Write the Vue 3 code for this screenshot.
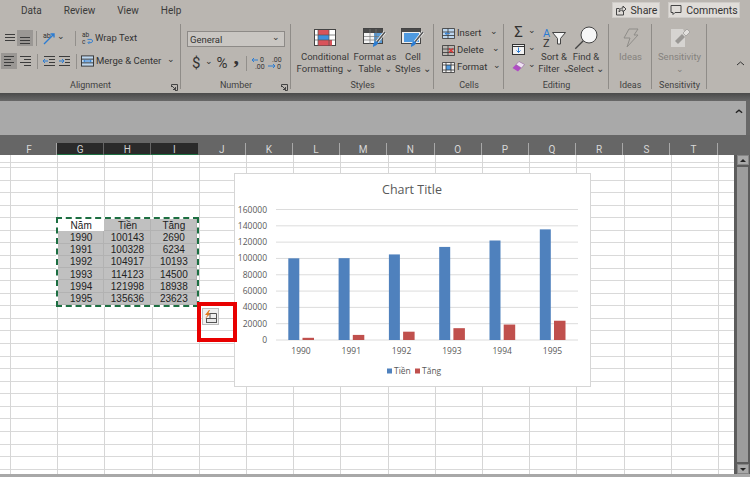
<template>
  <div class="excel">
    <header class="ribbon">
      <div class="tabs">
        <nav class="tab-list">
          <span v-for="t in tabs" :key="t">{{ t }}</span>
        </nav>
        <div class="tab-actions">
          <button class="top-btn share">
            <svg width="12" height="12" viewBox="0 0 12 12" fill="none" stroke="#444"><path d="M1.5 4.500h3M1.500 4.500v6.500h7V8" /><path d="M4 8c0-3 2-4 4-4V2l3 3-3 3V6C6 6 5 7 4 8z" /></svg>
            Share
          </button>
          <button class="top-btn comments">
            <svg width="12" height="12" viewBox="0 0 12 12" fill="none" stroke="#444"><path d="M1 1.500h10v7H5L3 10.500v-2H1z" /></svg>
            Comments
          </button>
        </div>
      </div>

      <div class="groups">
        <section class="group alignment">
          <div class="group-body align-rows">
            <div class="tool-row">
              <svg class="ico" viewBox="0 0 16 16" stroke="#3c3c3c"><path d="M4 4.500h10M4 7.500h10M4 10.500h10" /></svg>
              <svg class="ico on" viewBox="0 0 16 16" stroke="#3c3c3c"><path d="M3 7.500h10M3 10.500h10M3 13.500h10" /></svg>
              <i class="sep s1"></i>
              <svg class="orient" viewBox="0 0 14 14" fill="none"><text x="1" y="7" class="tiny">ab</text><path d="M2 13 12 3M8.500 3H12v3.500" stroke="#2b7cd3" stroke-width="1.400" /></svg>
              <span class="chev">⌄</span>
              <i class="sep s2"></i>
              <svg class="wrap-ico" viewBox="0 0 14 14" fill="none"><text x="1" y="6" class="tiny">ab</text><text x="1" y="13" class="tiny">c</text><path d="M7 8.500h4a1.800 1.800 0 0 1 0 3.500H8M9 10.500l-1.500 1.500L9 13.500" stroke="#2b7cd3" /></svg>
              <span class="label">Wrap Text</span>
            </div>
            <div class="tool-row">
              <svg class="ico on" viewBox="0 0 16 16" stroke="#3c3c3c"><path d="M3 3.500h10M3 6.500h7M3 9.500h10M3 12.500h7" /></svg>
              <svg class="ico" viewBox="0 0 16 16" stroke="#3c3c3c"><path d="M3 3.500h11M7 6.500h7M3 9.500h11M7 12.500h7" /></svg>
              <i class="sep s3"></i>
              <svg class="ico" viewBox="0 0 16 16" fill="none" stroke="#3c3c3c"><path d="M3 3.500h11M8 6.500h6M8 9.500h6M3 12.500h11" /><path d="M7 8H2M4 6 2 8l2 2" stroke="#2b7cd3" /></svg>
              <svg class="ico" viewBox="0 0 16 16" fill="none" stroke="#3c3c3c"><path d="M2 3.500h11M8 6.500h5M8 9.500h5M2 12.500h11" /><path d="M2 8h5M5 6l2 2-2 2" stroke="#2b7cd3" /></svg>
              <i class="sep s4"></i>
              <svg class="merge-ico" viewBox="0 0 14 12" fill="#bcd6ee" stroke="#333"><rect x="0.500" y="0.500" width="13" height="11" /><path d="M.5 4h13M.5 8h13" /><path d="M3 6h8M4.500 4.500 3 6l1.500 1.500M9.500 4.500 11 6 9.500 7.500" stroke="#2b7cd3" fill="none" /></svg>
              <span class="label merge-text">Merge &amp; Center</span>
              <span class="chev">⌄</span>
            </div>
          </div>
          <footer class="caption">Alignment</footer>
          <svg class="launcher" viewBox="0 0 7 7" fill="none" stroke="#444"><path d="M.5 3V.5H6.500V6.500H4" /><path d="M1 2l3.500 3.500M4.500 3v2.500H2" /></svg>
        </section>

        <section class="group number">
          <div class="group-body number-body">
            <div class="format-select"><span>General</span><span class="chev">⌄</span></div>
            <div class="number-tools">
              <span class="sym dollar">$</span>
              <span class="chev">⌄</span>
              <span class="sym percent">%</span>
              <span class="sym comma">,</span>
              <i class="sep"></i>
              <svg class="dec" viewBox="0 0 16 14" fill="none"><text x="9" y="6" class="tiny">0</text><text x="4" y="13" class="tiny">.00</text><path d="M7 4H1M3 2 1 4l2 2" stroke="#2b7cd3" /></svg>
              <svg class="dec" viewBox="0 0 16 14" fill="none"><text x="5" y="6" class="tiny">.00</text><text x="10" y="13" class="tiny">0</text><path d="M1 10h7M6 8l2 2-2 2" stroke="#2b7cd3" /></svg>
            </div>
          </div>
          <footer class="caption">Number</footer>
          <svg class="launcher" viewBox="0 0 7 7" fill="none" stroke="#444"><path d="M.5 3V.5H6.500V6.500H4" /><path d="M1 2l3.500 3.500M4.500 3v2.500H2" /></svg>
        </section>

        <section class="group styles">
          <div class="group-body big-row">
            <div class="big cond">
              <svg class="big-ico" viewBox="0 0 24 20"><rect x="1.500" y="1.500" width="21" height="16" fill="#fff" stroke="#444" /><path d="M5 2h11v5H5z" fill="#d9535a" /><path d="M5 7h11v5H5z" fill="#3f8fdd" /><path d="M5 12h14v5.500H5z" fill="#d9535a" /><path d="M5 2v16M16 2v16M1.500 7h21M1.500 12h21" stroke="#555" fill="none" stroke-width=".7" /></svg>
              <span>Conditional</span><span>Formatting ⌄</span>
            </div>
            <div class="big table">
              <svg class="big-ico" viewBox="0 0 24 20" fill="none"><rect x=".5" y=".5" width="19" height="15" fill="#f4f4f4" stroke="#444" /><rect x="1" y="1" width="18.500" height="4" fill="#4a4a4a" /><path d="M11 5h8v10h-8z" fill="#5b9bd5" /><path d="M1 8.500h19M1 12h19M7 1v15M13 1v15" stroke="#777" stroke-width=".7" /><path d="m22 4-8 10" stroke="#f5f5f5" stroke-width="3" /><path d="m22 4-8 10" stroke="#555" stroke-width="1.500" /><path d="M12 14c2-1 3 0 3 1-1 3-4 3-5 4 0-2 0-4 2-5z" fill="#2b7cd3" /></svg>
              <span>Format as</span><span>Table ⌄</span>
            </div>
            <div class="big cell">
              <svg class="big-ico" viewBox="0 0 24 20" fill="none"><rect x=".5" y=".5" width="19" height="15" fill="#eee" stroke="#444" /><rect x="1" y="1" width="18.500" height="3" fill="#4a4a4a" /><rect x="3" y="5" width="15" height="9" fill="#4f9ae0" /><path d="m22 4-8 10" stroke="#f5f5f5" stroke-width="3" /><path d="m22 4-8 10" stroke="#555" stroke-width="1.500" /><path d="M12 14c2-1 3 0 3 1-1 3-4 3-5 4 0-2 0-4 2-5z" fill="#2b7cd3" /></svg>
              <span>Cell</span><span>Styles ⌄</span>
            </div>
          </div>
          <footer class="caption">Styles</footer>
        </section>

        <section class="group cells">
          <div class="group-body cell-rows">
            <div class="cell-row">
              <svg class="cell-ico" viewBox="0 0 13 11" fill="#bcd6ee" stroke="#333" stroke-width=".8"><path d="M.5.5h12v10H.5zM.5 4h12M.5 7.500h12M6 .5v10" /><path d="M8 5.500H3M5 4 3 5.500 5 7" stroke="#2b7cd3" fill="none" /></svg>
              <span class="label">Insert</span><span class="chev c-insert">⌄</span>
            </div>
            <div class="cell-row">
              <svg class="cell-ico" viewBox="0 0 13 11" fill="none" stroke="#333" stroke-width=".8"><path d="M.5.5h12v10H.5zM.5 4h12M.5 7.500h12M6 .5v10" /><path d="m7 3.500 4 4M11 3.500l-4 4" stroke="#d33" stroke-width="1.300" /></svg>
              <span class="label">Delete</span><span class="chev c-delete">⌄</span>
            </div>
            <div class="cell-row">
              <svg class="cell-ico" viewBox="0 0 13 11" fill="#f2f2f2" stroke="#333" stroke-width=".8"><path d="M.5.5h12v10H.5z" /><path d="M4 3h5v5H4z" fill="#4f9ae0" stroke="none" /><path d="M.5 3h12M.5 8h12M4 .5v10M9 .5v10" fill="none" /></svg>
              <span class="label">Format</span><span class="chev">⌄</span>
            </div>
          </div>
          <footer class="caption">Cells</footer>
        </section>

        <section class="group editing">
          <div class="group-body big-row">
            <div class="edit-col">
              <div class="edit-row"><span class="sigma">Σ</span><span class="chev">⌄</span></div>
              <div class="edit-row">
                <svg class="edit-ico" viewBox="0 0 13 11" fill="#f2f2f2" stroke="#333"><rect x=".5" y=".5" width="12" height="10" /><path d="M.5 2.500h12" /><path d="M6.500 3.500v5M4.500 6.500l2 2 2-2" stroke="#2b7cd3" fill="none" /></svg>
                <span class="chev">⌄</span>
              </div>
              <div class="edit-row">
                <svg class="edit-ico" viewBox="0 0 13 11"><path d="M.5 7 7 .5l5.500 3-6.500 7z" fill="#b04cc4" /><path d="m7 .5 5.500 3-3 3.500L4 3.500z" fill="#efe2f3" stroke="#8a6a92" stroke-width=".5" /></svg>
                <span class="chev">⌄</span>
              </div>
            </div>
            <div class="big sort">
              <svg class="big-ico over" viewBox="0 0 24 20" fill="none"><text x="1" y="9" class="az blue">A</text><text x="1" y="19" class="az">Z</text><path d="M10.500 4.500h13l-5 6V16h-3v-5.500z" fill="#f5f5f5" stroke="#444" /></svg>
              <span>Sort &amp;</span><span>Filter ⌄</span>
            </div>
            <div class="big find">
              <svg class="big-ico over" viewBox="0 0 24 20" fill="none"><circle cx="15" cy="7" r="8" fill="#f6f6f6" stroke="#444" /><path d="m9.300 12.700-8 8" stroke="#444" stroke-width="1.300" /></svg>
              <span>Find &amp;</span><span>Select ⌄</span>
            </div>
          </div>
          <footer class="caption">Editing</footer>
        </section>

        <section class="group ideas">
          <div class="group-body big-row">
            <div class="big muted">
              <svg class="big-ico" viewBox="0 0 16 20" fill="none" stroke="#8f8d89"><path d="M6 1h9l-4 6h4L4 19l3-9H1z" /></svg>
              <span>Ideas</span>
            </div>
          </div>
          <footer class="caption">Ideas</footer>
        </section>

        <section class="group sensitivity">
          <div class="group-body big-row">
            <div class="big muted">
              <svg class="big-ico" viewBox="0 0 22 20"><path d="M2 1h12l2 4v14H2z" fill="#d6d4d1" /><path d="m6 13 7-7 3 3-7 7z" fill="#9a9895" /><path d="m14 5 4-4 3 3-4 4z" fill="#e2e0dd" stroke="#9a9895" stroke-width=".7" /></svg>
              <span>Sensitivity</span><span class="chev">⌄</span>
            </div>
          </div>
          <footer class="caption">Sensitivity</footer>
        </section>

        <svg class="collapse" viewBox="0 0 9 5" fill="none" stroke="#333"><path d="m1 4 3.500-3L8 4" /></svg>
      </div>
    </header>

    <div class="ribbon-shadow"></div>

    <div class="formula-bar">
      <svg class="collapse-bar" viewBox="0 0 9 5" fill="none" stroke="#222" stroke-width="1.500"><path d="m1 4 3.500-3L8 4" /></svg>
    </div>

    <div class="col-header">
      <span class="col-first"></span>
      <span
        v-for="c in columns"
        :key="c"
        class="col"
        :class="{ picked: selected.includes(c) }"
      >{{ c }}</span>
    </div>

    <div class="sheet-wrap">
      <main class="sheet">
        <div class="data-table">
          <template v-for="(row, i) in rows" :key="i">
            <span
              v-for="(v, j) in row"
              :key="j"
              class="data-cell"
              :class="{ active: i === 0 && j === 0 }"
            >{{ v }}</span>
          </template>
        </div>

        <div class="chart">
          <svg width="355" height="212" viewBox="235 174 355 212">
            <text x="412" y="194" class="chart-title" text-anchor="middle">Chart Title</text>
            <g v-for="t in ticks" :key="t">
              <line x1="276" x2="578" :y1="yOf(t)" :y2="yOf(t)" stroke="#dcdcdc" />
              <text x="267" :y="yOf(t) + 3" class="axis" text-anchor="end">{{ t }}</text>
            </g>
            <g v-for="(b, i) in bars" :key="b.year">
              <rect :x="288.300 + i * 50.300" :y="yOf(b.tien)" width="11" :height="340 - yOf(b.tien)" fill="#4f81bd" />
              <rect :x="302.500 + i * 50.300" :y="yOf(b.tang)" width="11.500" :height="340 - yOf(b.tang)" fill="#c0504d" />
              <text :x="301 + i * 50.300" y="354" class="axis" text-anchor="middle">{{ b.year }}</text>
            </g>
            <rect x="387" y="368.500" width="5" height="5" fill="#4f81bd" />
            <text x="394" y="374" class="axis">Tiền</text>
            <rect x="415" y="368.500" width="5" height="5" fill="#c0504d" />
            <text x="422" y="374" class="axis">Tăng</text>
          </svg>
        </div>

        <div class="quick-mark">
          <button class="quick-btn">
            <svg width="15" height="14" viewBox="0 0 15 14" fill="none"><path d="M6 0 2 5h2.500L2 9l6-6H5.500L7 0z" fill="#e07b20" /><rect x="3.500" y="8.500" width="10" height="4" fill="#e8e8e8" stroke="#555" /><path d="M7 8.500V3.500h6.500v9" stroke="#555" /></svg>
          </button>
        </div>
      </main>

      <aside class="scrollbar">
        <button class="scroll-btn"><i class="tri up"></i></button>
        <div class="scroll-track"></div>
        <button class="scroll-btn"><i class="tri down"></i></button>
      </aside>
    </div>
    <div class="bottom-strip"></div>
  </div>
</template>

<script setup>
const tabs = ['Data', 'Review', 'View', 'Help']
const columns = ['F', 'G', 'H', 'I', 'J', 'K', 'L', 'M', 'N', 'O', 'P', 'Q', 'R', 'S', 'T']
const selected = ['G', 'H', 'I']

const rows = [
  ['Năm', 'Tiền', 'Tăng'],
  [1990, 100143, 2690],
  [1991, 100328, 6234],
  [1992, 104917, 10193],
  [1993, 114123, 14500],
  [1994, 121998, 18938],
  [1995, 135636, 23623],
]

const ticks = [160000, 140000, 120000, 100000, 80000, 60000, 40000, 20000, 0]
const bars = rows.slice(1).map(([year, tien, tang]) => ({ year, tien, tang }))

// 0 sits at y=340 and 160000 at y=209.5 in page coords
const yOf = (v) => 340 - (v / 160000) * 130.5
</script>

<style>
html, body { margin: 0; background: #fff; }
</style>

<style scoped>
.excel { display: flex; flex-direction: column; width: 750px; height: 477px; overflow: hidden; font-family: Roboto, "Open Sans", sans-serif; color: #333; }

.ribbon { background: #bab6b1; height: 93px; flex: none; position: relative; }
.tabs { display: flex; justify-content: space-between; height: 23px; }
.tab-list { display: flex; gap: 22px; padding: 4px 0 0 21px; font-size: 10px; line-height: 14px; color: #3a3a3a; }
.tab-actions { display: flex; gap: 8px; padding: 2px 10px 0 0; }
.top-btn { display: flex; align-items: center; justify-content: center; gap: 4px; height: 16px; padding: 0; border: 1px solid #cfccc8; background: #dfdcd8; font: 10.500px Roboto, sans-serif; color: #333; }
.share { width: 48px; }
.comments { width: 72px; }

.groups { display: flex; height: 70px; }
.group { position: relative; display: flex; flex-direction: column; flex: none; height: 70px; }
.group::after { content: ""; position: absolute; right: 0; top: 1px; width: 1px; height: 65px; background: #8f8c88; }
.group-body { flex: 1; min-height: 0; }
.caption { height: 14px; font-size: 9px; line-height: 12px; text-align: center; color: #3f3f3f; }
.launcher { position: absolute; right: 3px; bottom: 2px; width: 7px; height: 7px; }
.alignment { width: 181px; }
.number { width: 110px; }
.styles { width: 143px; }
.cells { width: 70px; }
.editing { width: 105px; }
.ideas { width: 43px; }
.sensitivity { width: 55px; }

.label { font-size: 9.500px; line-height: 14px; white-space: nowrap; }
.chev { font-size: 9px; line-height: 9px; color: #333; position: relative; top: -2px; }
.tiny { font: 7px Roboto, sans-serif; fill: #333; }

.align-rows { display: flex; flex-direction: column; gap: 7px; padding: 7px 0 0 1px; }
.tool-row { position: relative; display: flex; align-items: center; height: 16px; }
.ico { width: 16px; height: 16px; flex: none; fill: none; }
.ico.on { background: #9a9794; }
.sep { display: block; width: 1px; height: 15px; background: #928f8b; flex: none; }
.s1 { margin: 0 5px 0 3px; }
.orient { width: 14px; height: 14px; margin-right: 1px; }
.s2 { margin: 0 5px 0 10px; }
.wrap-ico { width: 13px; height: 14px; margin-right: 1px; }
.s3 { margin: 0 3px 0 4px; }
.s4 { margin: 0 4px 0 3px; }
.merge-ico { width: 13px; height: 12px; margin-right: 2px; }
.merge-text { margin-right: 6px; }

.number-body { padding: 8px 6px 0; }
.format-select { display: flex; justify-content: space-between; align-items: center; box-sizing: border-box; width: 98px; height: 16px; padding: 0 4px 0 2px; background: #c9c6c2; border: 1px solid #8d8a87; font-size: 9.500px; }
.number-tools { display: flex; align-items: center; height: 18px; margin-top: 7px; padding-left: 5px; }
.sym { line-height: 18px; color: #333; }
.dollar { font-size: 15px; margin-right: 5px; }
.percent { font-size: 15px; margin: 0 6px 0 3px; }
.comma { font: bold 22px/14px "Liberation Serif", serif; position: relative; top: -6px; margin-right: 7px; }
.number-tools .sep { margin-right: 4px; }
.dec { width: 16px; height: 14px; flex: none; }

.big-row { display: flex; }
.big { display: flex; flex-direction: column; align-items: center; flex: none; font-size: 9.500px; line-height: 12px; white-space: nowrap; color: #3a3a3a; padding-top: 5px; }
.big-ico { height: 20px; width: 24px; margin-bottom: 3px; flex: none; }
.big-ico.over { overflow: visible; }
.cond { width: 58px; margin-left: 5px; }
.table { width: 42px; margin-left: 0; }
.cell { width: 34px; }
.muted { color: #85827e; width: 100%; }
.muted .chev { top: 0; margin-top: 2px; color: #85827e; }

.cell-rows { display: flex; flex-direction: column; gap: 3px; padding: 3px 0 0 8px; }
.cell-row { display: flex; align-items: center; height: 14px; }
.cell-ico { width: 13px; height: 11px; margin-right: 2px; flex: none; }
.cell-row .chev { margin-left: 6px; }
.cell-row .c-insert { margin-left: 9px; }
.cell-row .c-delete { margin-left: 8px; }

.edit-col { display: flex; flex-direction: column; gap: 3px; flex: none; box-sizing: border-box; width: 34px; padding: 2px 0 0 8px; }
.edit-row { display: flex; align-items: center; gap: 3px; height: 14px; }
.sigma { font-size: 15px; line-height: 14px; width: 13px; text-align: center; }
.edit-ico { width: 13px; height: 11px; flex: none; }
.sort { width: 32px; }
.find { width: 32px; }

.collapse { position: absolute; left: 736px; top: 61px; width: 9px; height: 5px; }

.ribbon-shadow { flex: none; height: 8px; background: linear-gradient(#4a4a4a, #686868); }
.formula-bar { flex: none; height: 34px; background: #a9a9a9; border-right: 4px solid #686868; box-sizing: border-box; position: relative; }
.collapse-bar { position: absolute; right: 3px; top: 8px; width: 8px; height: 5px; }

.col-header { flex: none; display: grid; grid-template-columns: 2px 55px repeat(14, 47.200px); height: 20px; padding-top: 8px; box-sizing: border-box; background: #666; }
.col { display: flex; align-items: center; justify-content: center; box-sizing: border-box; font-size: 10px; color: #d8d8d8; border-right: 1px solid #a8a8a8; }
.col.picked { background: #2a2a2a; color: #cfcfcf; border-right-color: #666; box-shadow: inset 0 -1px #1d6f42; }

.sheet-wrap { flex: 1; min-height: 0; display: flex; }
.sheet {
  position: relative;
  flex: 1;
  background-color: #fff;
  background-image:
    repeating-linear-gradient(to right, #d6d6d6 0 1px, transparent 1px 47.200px),
    repeating-linear-gradient(to bottom, #d9d9d9 0 1px, transparent 1px 12.570px);
  background-position: 10px 0, 0 12px;
}
.data-table {
  position: absolute;
  left: 56px;
  top: 62px;
  width: 143px;
  height: 90px;
  box-sizing: border-box;
  display: grid;
  grid-template-columns: repeat(3, 1fr);
  grid-template-rows: repeat(7, 1fr);
  border: 2px dashed #1d6f42;
  background: #fff;
}
.data-cell { display: flex; align-items: center; justify-content: center; background: #c0c0c0; font: 10px "Liberation Sans", sans-serif; color: #222; box-shadow: inset -1px -1px #b2b2b2; }
.data-cell.active { background: #fff; box-shadow: none; }

.chart { position: absolute; left: 235px; top: 19px; width: 355px; height: 212px; background: #fff; box-shadow: 0 0 0 1px #d6d6d6; }
.chart svg { display: block; }
.chart-title { font: 12.500px "Open Sans", sans-serif; fill: #595959; }
.axis { font: 8.500px "Open Sans", sans-serif; fill: #595959; }
.az { font: 11px Roboto, sans-serif; fill: #333; }
.az.blue { fill: #2b7cd3; }

.quick-mark { position: absolute; left: 197px; top: 147px; width: 40px; height: 40px; box-sizing: border-box; border: 4px solid #e80000; }
.quick-btn { position: absolute; left: 1px; top: 2px; width: 17px; height: 17px; padding: 0; display: flex; align-items: center; justify-content: center; background: #f0f0f0; border: 1px solid #bcbcbc; }

.scrollbar { flex: none; width: 16px; background: #5c5c5c; display: flex; flex-direction: column; align-items: center; gap: 2px; padding: 0 0 0 1px; box-sizing: border-box; }
.scroll-btn { display: flex; align-items: center; justify-content: center; width: 12px; height: 10px; flex: none; padding: 0; background: #a8a8a8; border: 1px solid #858585; }
.scroll-track { flex: 1; width: 11px; background: #9c9c9c; }
.tri { width: 0; height: 0; border-left: 3px solid transparent; border-right: 3px solid transparent; }
.tri.up { border-bottom: 3px solid #222; }
.tri.down { border-top: 3px solid #222; }
.bottom-strip { flex: none; height: 3px; background: #a8a8a8; }
</style>
